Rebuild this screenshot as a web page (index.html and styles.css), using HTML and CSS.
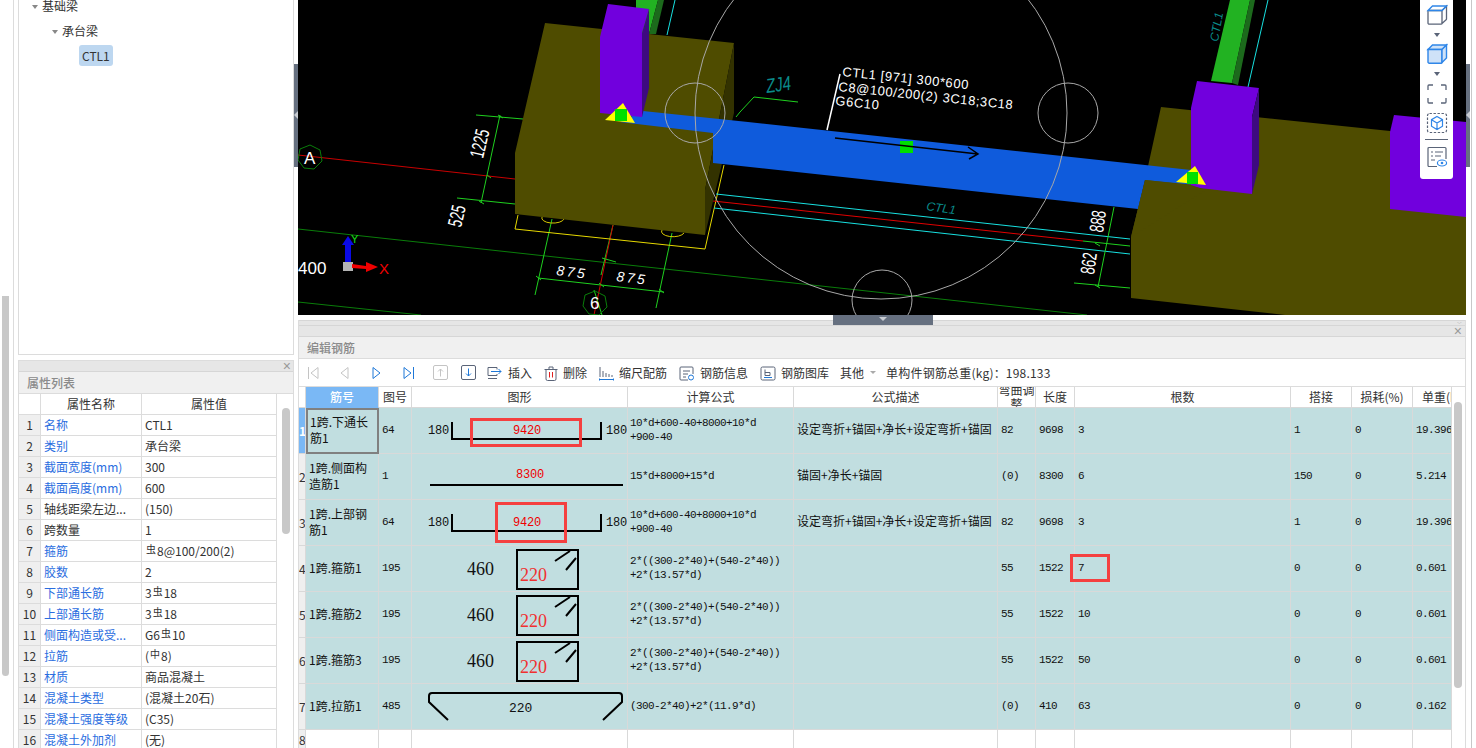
FILE: index.html
```html
<!DOCTYPE html>
<html lang="zh">
<head>
<meta charset="utf-8">
<title>编辑钢筋</title>
<link rel="stylesheet" href="styles.css">
</head>
<body>
<div class="page">
  <div class="rail"><div class="rail-thumb"></div></div>
  <aside class="side">
    <section class="tree-panel">
      <div class="node lv1"><i class="caret"></i>基础梁</div>
      <div class="node lv2"><i class="caret"></i>承台梁</div>
      <div class="node lv3"><span class="chip">CTL1</span></div>
    </section>
    <section class="prop-panel">
      <div class="strip"><span class="close">×</span></div>
      <div class="title">属性列表</div>
      <div class="prop-body">
        <table class="props">
          <colgroup><col class="p0"><col class="p1"><col class="p2"></colgroup>
          <tr><th class="corner"></th><th>属性名称</th><th>属性值</th></tr>
          <tr><td class="no">1</td><td class="blue">名称</td><td>CTL1</td></tr>
          <tr><td class="no">2</td><td class="blue">类别</td><td>承台梁</td></tr>
          <tr><td class="no">3</td><td class="blue">截面宽度(mm)</td><td>300</td></tr>
          <tr><td class="no">4</td><td class="blue">截面高度(mm)</td><td>600</td></tr>
          <tr><td class="no">5</td><td>轴线距梁左边...</td><td>(150)</td></tr>
          <tr><td class="no">6</td><td>跨数量</td><td>1</td></tr>
          <tr><td class="no">7</td><td class="blue">箍筋</td><td><span class="steel">虫</span>8@100/200(2)</td></tr>
          <tr><td class="no">8</td><td class="blue">胶数</td><td>2</td></tr>
          <tr><td class="no">9</td><td class="blue">下部通长筋</td><td>3<span class="steel">虫</span>18</td></tr>
          <tr><td class="no">10</td><td class="blue">上部通长筋</td><td>3<span class="steel">虫</span>18</td></tr>
          <tr><td class="no">11</td><td class="blue">侧面构造或受...</td><td>G6<span class="steel">虫</span>10</td></tr>
          <tr><td class="no">12</td><td class="blue">拉筋</td><td>(<span class="steel">中</span>8)</td></tr>
          <tr><td class="no">13</td><td class="blue">材质</td><td>商品混凝土</td></tr>
          <tr><td class="no">14</td><td class="blue">混凝土类型</td><td>(混凝土20石)</td></tr>
          <tr><td class="no">15</td><td class="blue">混凝土强度等级</td><td>(C35)</td></tr>
          <tr><td class="no">16</td><td class="blue">混凝土外加剂</td><td>(无)</td></tr>
        </table>
        <div class="prop-scroll"><div class="prop-thumb"></div></div>
      </div>
    </section>
  </aside>
  <div class="grip-v"><div class="grip-v-bar"><i></i></div></div>
  <main class="main">
    <div class="view">
      <svg class="scene" width="1168" height="315" viewBox="298 0 1168 315">
        <rect x="298" y="0" width="1168" height="315" fill="#000"/>
        <g fill="none" stroke-width="1">
          <path d="M298 155L515 179" stroke="#c80000"/>
          <path d="M298 229L1087 315M298 302L421 315" stroke="#0a7d0a"/>
          <path d="M476 115L523 119M457 198L515 204M500 115L481 203M498 115l5 3M479 201l5 3M487 175l4 3" stroke="#1fd01f"/>
          <path d="M552 219L535 295M672 233L656 308M538 278L664 292M613 225L601 275" stroke="#1fd01f"/>
          <path d="M613 225L594 315" stroke="#d00000"/>
          <path d="M602 258L616 262M594 290L602 315M536 276l5 4M599 283l5 4M659 289l5 4" stroke="#1fd01f"/>
          <path d="M518 215L515 229L705 249L724 165" stroke="#e6d800"/>
          <path d="M542 217a11 5 0 0 0 22 2M662 230a11 5 0 0 0 22 3" stroke="#d8c800"/>
          <path d="M740 112L754 97L798 102M736 117L740 112" stroke="#1fd01f"/>
          <path d="M716 194L1130 239M714 208L1130 254M1268 0L1248 87M675 0L667 35" stroke="#18e0e0"/>
          <path d="M713 201L1083 241" stroke="#e00000"/>
          <path d="M1083 241L1130 246M1074 283L1130 288M1114 207L1098 287M1095 243l5 3M1095 285l5 3" stroke="#1fd01f"/>
          <polygon points="310,145 320,150 322,161 314,169 304,168 298,160 300,149" stroke="#0a7d0a"/>
          <polygon points="595,291 605,296 607,307 599,315 589,314 583,306 585,295" stroke="#0a7d0a"/>
        </g>
        <polygon fill="#22b222" points="636,0 658,0 649,34 636,34"/>
        <polygon fill="#1c6a1c" points="658,0 664,0 656,34 649,34"/>
        <polygon fill="#4f4c00" points="545,23 734,43 705,190 705,235 515,214 515,153"/>
        <polygon fill="#333200" points="734,43 734,113 705,235 705,190"/>
        <polygon fill="#22b222" points="1230,0 1250,0 1232,83 1211,81"/>
        <polygon fill="#1c6a1c" points="1250,0 1255,0 1238,85 1232,83"/>
        <polygon fill="#4f4c00" points="1161,107 1390,131 1466,140 1466,315 1285,315 1131,298 1131,237 1145,180"/>
        <polygon fill="#0f5bdc" points="620,122 643,111 748,122 1191,170 1206,186 1145,180 1138,209 713,163 713,133"/>
        <polygon fill="#7100dd" points="608,4 649,9 642,33 642,117 600,113 600,37"/>
        <polygon fill="#3d0a80" points="649,9 649,88 642,117 642,33"/>
        <polygon fill="#7100dd" points="1197,81 1259,88 1252,117 1252,194 1191,187 1191,108"/>
        <polygon fill="#3d0a80" points="1259,88 1259,165 1252,194 1252,117"/>
        <polygon fill="#4f4c00" points="1145,180 1191,185 1206,190 1131,237"/>
        <polygon fill="#7100dd" points="1394,115 1466,122 1466,217 1390,209 1390,132"/>
        <polygon fill="#ffff00" points="623,103 635,123 605,120"/>
        <rect x="615" y="109" width="12" height="12" fill="#00e000"/>
        <polygon fill="#ffff00" points="1195,166 1206,185 1176,182"/>
        <rect x="1187" y="172" width="11" height="12" fill="#00e000"/>
        <rect x="900" y="141" width="13" height="12" fill="#00e000"/>
        <path d="M835 138L978 154M968 147L978 154L969 159" fill="none" stroke="#000" stroke-width="1.5"/>
        <path d="M840 74L827 130" stroke="#fff" stroke-width="1.5"/>
        <g fill="none" stroke="#a8a8a8" stroke-width="1">
          <circle cx="881" cy="113" r="186"/>
          <circle cx="695" cy="113" r="30"/>
          <circle cx="1068" cy="113" r="30"/>
          <circle cx="882" cy="300" r="30"/>
        </g>
        <g class="cad">
          <text class="big" transform="translate(310 164)" x="-6">A</text>
          <text class="big" transform="translate(595 309)" x="-5">6</text>
          <text class="dim" transform="translate(483 159) rotate(-77) scale(.65 1)">1225</text>
          <text class="dim" transform="translate(461 228) rotate(-77) scale(.65 1)">525</text>
          <text class="dim2" transform="translate(556 275) rotate(7)">875</text>
          <text class="dim2" transform="translate(616 281) rotate(7)">875</text>
          <text class="dim" transform="translate(1103 233) rotate(-82) scale(.65 1)">888</text>
          <text class="dim" transform="translate(1094 275) rotate(-82) scale(.65 1)">862</text>
          <text class="note" transform="translate(842 76) rotate(6)">CTL1 [971] 300*600</text>
          <text class="note" transform="translate(838 91) rotate(6)">C8@100/200(2) 3C18;3C18</text>
          <text class="note" transform="translate(835 105) rotate(6)">G6C10</text>
          <text class="tag" transform="translate(767 93) rotate(-8) scale(.75 1)">ZJ4</text>
          <text class="tag small" transform="translate(926 210) rotate(8)">CTL1</text>
          <text class="tag small" transform="translate(1218 42) rotate(-80)">CTL1</text>
          <text class="scale" x="298" y="274">400</text>
        </g>
        <g>
          <path d="M348 236L354 245L351 245L351 262L345 262L345 245L342 245Z" fill="#0a0ae6"/>
          <rect x="343" y="262" width="10" height="9" fill="#b4b4b4"/>
          <path d="M352 264L366 266L366 262L378 267L366 272L366 269L352 268Z" fill="#f00000"/>
          <text class="axis-x" x="379" y="274">X</text>
          <text class="axis-y" x="351" y="243">Y</text>
        </g>
      </svg>
      <div class="grip-v right"><div class="grip-v-bar"><i></i></div></div>
      <div class="view-tools">
        <svg width="22" height="22" viewBox="0 0 22 22" fill="none" stroke="#5a6478" stroke-width="1.3"><path d="M2 6.500V19a1.200 1.200 0 0 0 1.200 1.200H15a1 1 0 0 0 1-1V6.500H3M16 6.500L20.500 2V15a1 1 0 0 1-.4.8L16 19.500"/><path d="M2 6.500L6.500 2H20.500L16 6.500H2Z" stroke="#2f86e8"/></svg>
        <i class="tool-arrow"></i>
        <svg width="22" height="22" viewBox="0 0 22 22" fill="#cfe2f8" stroke="#2f86e8" stroke-width="1.4"><path d="M2 6.500L6.500 2H20.500L16 6.500H2Z"/><path d="M2 6.500V19a1.200 1.200 0 0 0 1.200 1.200H15a1 1 0 0 0 1-1V6.500Z"/><path d="M16 6.500L20.500 2V15L16 19.500Z"/></svg>
        <i class="tool-arrow"></i>
        <svg class="t3" width="22" height="22" viewBox="0 0 22 22" fill="none" stroke="#5a6478" stroke-width="1.3"><path d="M2 7V3a1 1 0 0 1 1-1H7M15 2H19a1 1 0 0 1 1 1V7M20 15V19a1 1 0 0 1-1 1H15M7 20H3a1 1 0 0 1-1-1V15"/></svg>
        <svg class="t4" width="22" height="22" viewBox="0 0 22 22" fill="none"><rect x="1.500" y="1.500" width="19" height="19" rx="2" stroke="#5a6478" stroke-width="1.2" stroke-dasharray="2.4 1.6"/><path d="M11 4.500L16.500 7.700V14.200L11 17.500L5.500 14.200V7.700ZM5.500 7.700L11 11L16.500 7.700M11 11V17.500" stroke="#2f86e8" stroke-width="1.2"/></svg>
        <div class="tool-sep"></div>
        <svg width="22" height="22" viewBox="0 0 22 22" fill="none"><path d="M11 20.500H3a1 1 0 0 1-1-1V2.500a1 1 0 0 1 1-1H19a1 1 0 0 1 1 1V13" stroke="#5a6478" stroke-width="1.2"/><path d="M9 6H17M5 6H7M9 10H15M5 10H7M5 14H9" stroke="#5a6478" stroke-width="1.1"/><ellipse cx="16" cy="17" rx="4.600" ry="3" fill="#fff" stroke="#2f86e8" stroke-width="1.2"/><circle cx="16" cy="17" r="1.300" fill="#2f86e8"/></svg>
      </div>
    </div>
    <div class="splitter"><div class="splitter-bar"><i></i></div></div>
    <section class="rebar">
      <div class="strip thin"><span class="chev">﹀</span></div>
      <div class="strip"><span class="close">×</span></div>
      <div class="title">编辑钢筋</div>
      <div class="toolbar">
        <span class="nav"><svg width="12" height="14" viewBox="0 0 12 14" fill="none" stroke="#c4c4c4"><path d="M1.500 1V13M11 1.500L4 7L11 12.500Z"/></svg></span>
        <span class="nav"><svg width="12" height="14" viewBox="0 0 12 14" fill="none" stroke="#c4c4c4"><path d="M9 1.500L2 7L9 12.500Z"/></svg></span>
        <span class="nav"><svg width="12" height="14" viewBox="0 0 12 14" fill="none" stroke="#1f78d8"><path d="M2 1.500L9 7L2 12.500Z"/></svg></span>
        <span class="nav"><svg width="12" height="14" viewBox="0 0 12 14" fill="none" stroke="#1f78d8"><path d="M1 1.500L8 7L1 12.500ZM10.500 1V13"/></svg></span>
        <span class="boxed"><svg width="15" height="15" viewBox="0 0 15 15" fill="none" stroke="#c4c4c4"><rect x=".5" y=".5" width="14" height="14" rx="1.500"/><path d="M7.500 11.500V4M5 6.500L7.500 4L10 6.500"/></svg></span>
        <span class="boxed"><svg width="15" height="15" viewBox="0 0 15 15" fill="none"><rect x=".5" y=".5" width="14" height="14" rx="1.500" stroke="#5a6478"/><path d="M7.500 3.500V11M5 8.500L7.500 11L10 8.500" stroke="#1f78d8"/></svg></span>
        <span class="tool first"><svg width="16" height="14" viewBox="0 0 16 14" fill="none"><path d="M10 3.500V1.500H1V9.500H10V8" stroke="#5a6478"/><path d="M4 5.500H14M11.500 3L14 5.500L11.500 8" stroke="#1f78d8"/><path d="M1 12.500H10" stroke="#5a6478"/></svg>插入</span>
        <span class="tool"><svg width="14" height="15" viewBox="0 0 14 15" fill="none" stroke="#5a6478"><path d="M2 3.500V13a1.500 1.500 0 0 0 1.500 1.500h7A1.500 1.500 0 0 0 12 13V3.500M.5 3.500H13.500M5 3.500V1h4V3.500"/><path d="M5.500 6V11.500M8.500 6V11.500" stroke="#e02020"/></svg>删除</span>
        <span class="tool"><svg width="15" height="15" viewBox="0 0 15 15" fill="none" stroke="#5a6478"><path d="M1 1V11M4 5V11M7 7V11M10 8V11M13 9V11"/><path d="M0 13.500H15M0 12V15M15 12V15" stroke="#1f78d8"/></svg>缩尺配筋</span>
        <span class="tool"><svg width="16" height="15" viewBox="0 0 16 15" fill="none" stroke="#5a6478"><path d="M9 14H2a1 1 0 0 1-1-1V2a1 1 0 0 1 1-1H13a1 1 0 0 1 1 1V8M4 5H11M4 8H9M4 11H7"/><circle cx="12" cy="11.500" r="2.500" stroke="#1f78d8"/></svg>钢筋信息</span>
        <span class="tool"><svg width="16" height="15" viewBox="0 0 16 15" fill="none" stroke="#5a6478"><rect x="1" y="1" width="14" height="13" rx="1.500"/><path d="M5 3.500V9.500H10V6.500H5"/><path d="M4 11.500H12" stroke="#1f78d8"/></svg>钢筋图库</span>
        <span class="tool other">其他<i class="mini-arrow"></i></span>
        <span class="tool total">单构件钢筋总重(kg)：198.133</span>
      </div>
      <div class="grid-wrap">
        <table class="grid">
          <colgroup><col class="c0"><col class="c1"><col class="c2"><col class="c3"><col class="c4"><col class="c5"><col class="c6"><col class="c7"><col class="c8"><col class="c9"><col class="c10"><col class="c11"></colgroup>
          <thead><tr class="head">
            <th></th><th class="sel-head">筋号</th><th>图号</th><th>图形</th><th>计算公式</th><th>公式描述</th>
            <th><div class="clip">弯曲调整</div></th><th>长度</th><th>根数</th><th>搭接</th><th>损耗(%)</th><th><div class="clip nowrap">单重(kg)</div></th>
          </tr></thead>
          <tbody>
            <tr class="row">
              <td class="rn sel-rn">1</td><td class="name sel-cell">1跨.下通长筋1</td><td class="m">64</td>
              <td class="shape"><svg width="215" height="45" viewBox="0 0 215 45"><text class="sn" x="16" y="26">180</text><path class="line" d="M40 14V31H189V14"/><text class="sr" x="115" y="26">9420</text><text class="sn" x="194" y="26">180</text><rect class="mark" x="59.500" y="11.500" width="109" height="26"/></svg></td>
              <td class="m f">10*d+600-40+8000+10*d<br>+900-40</td><td class="d">设定弯折+锚固+净长+设定弯折+锚固</td><td class="m">82</td><td class="m">9698</td><td class="m">3</td><td class="m">1</td><td class="m">0</td><td class="m">19.396</td>
            </tr>
            <tr class="row">
              <td class="rn">2</td><td class="name">1跨.侧面构造筋1</td><td class="m">1</td>
              <td class="shape"><svg width="215" height="45" viewBox="0 0 215 45"><text class="sr" x="118" y="24">8300</text><path class="line" d="M18 31H211"/></svg></td>
              <td class="m f">15*d+8000+15*d</td><td class="d">锚固+净长+锚固</td><td class="m">(0)</td><td class="m">8300</td><td class="m">6</td><td class="m">150</td><td class="m">0</td><td class="m">5.214</td>
            </tr>
            <tr class="row">
              <td class="rn">3</td><td class="name">1跨.上部钢筋1</td><td class="m">64</td>
              <td class="shape"><svg width="215" height="45" viewBox="0 0 215 45"><text class="sn" x="16" y="26">180</text><path class="line" d="M40 14V31H189V14"/><text class="sr" x="115" y="26">9420</text><text class="sn" x="194" y="26">180</text><rect class="mark" x="84.500" y="3.500" width="69" height="38"/></svg></td>
              <td class="m f">10*d+600-40+8000+10*d<br>+900-40</td><td class="d">设定弯折+锚固+净长+设定弯折+锚固</td><td class="m">82</td><td class="m">9698</td><td class="m">3</td><td class="m">1</td><td class="m">0</td><td class="m">19.396</td>
            </tr>
            <tr class="row">
              <td class="rn">4</td><td class="name">1跨.箍筋1</td><td class="m">195</td>
              <td class="shape"><svg width="215" height="45" viewBox="0 0 215 45"><text class="st" x="55" y="29">460</text><path class="line" d="M105 4H166V43H105ZM143 15L158 5M154 24L164 12"/><text class="st red" x="108" y="35">220</text></svg></td>
              <td class="m f">2*((300-2*40)+(540-2*40))<br>+2*(13.57*d)</td><td class="d"></td><td class="m">55</td><td class="m">1522</td><td class="m rel">7<span class="mark-box"></span></td><td class="m">0</td><td class="m">0</td><td class="m">0.601</td>
            </tr>
            <tr class="row">
              <td class="rn">5</td><td class="name">1跨.箍筋2</td><td class="m">195</td>
              <td class="shape"><svg width="215" height="45" viewBox="0 0 215 45"><text class="st" x="55" y="29">460</text><path class="line" d="M105 4H166V43H105ZM143 15L158 5M154 24L164 12"/><text class="st red" x="108" y="35">220</text></svg></td>
              <td class="m f">2*((300-2*40)+(540-2*40))<br>+2*(13.57*d)</td><td class="d"></td><td class="m">55</td><td class="m">1522</td><td class="m">10</td><td class="m">0</td><td class="m">0</td><td class="m">0.601</td>
            </tr>
            <tr class="row">
              <td class="rn">6</td><td class="name">1跨.箍筋3</td><td class="m">195</td>
              <td class="shape"><svg width="215" height="45" viewBox="0 0 215 45"><text class="st" x="55" y="29">460</text><path class="line" d="M105 4H166V43H105ZM143 15L158 5M154 24L164 12"/><text class="st red" x="108" y="35">220</text></svg></td>
              <td class="m f">2*((300-2*40)+(540-2*40))<br>+2*(13.57*d)</td><td class="d"></td><td class="m">55</td><td class="m">1522</td><td class="m">50</td><td class="m">0</td><td class="m">0</td><td class="m">0.601</td>
            </tr>
            <tr class="row">
              <td class="rn">7</td><td class="name">1跨.拉筋1</td><td class="m">485</td>
              <td class="shape"><svg width="215" height="45" viewBox="0 0 215 45"><path class="line" d="M36 36L17 18V12Q17 9 20 9H207Q210 9 210 12V18L191 36"/><text class="sh" x="97" y="28">220</text></svg></td>
              <td class="m f">(300-2*40)+2*(11.9*d)</td><td class="d"></td><td class="m">(0)</td><td class="m">410</td><td class="m">63</td><td class="m">0</td><td class="m">0</td><td class="m">0.162</td>
            </tr>
            <tr class="blank">
              <td class="rn">8</td><td></td><td></td><td></td><td></td><td></td><td></td><td></td><td></td><td></td><td></td><td></td>
            </tr>
          </tbody>
        </table>
        <div class="grid-scroll"><div class="grid-thumb"></div></div>
      </div>
    </section>
  </main>
</div>
</body>
</html>
```
FILE: styles.css
```css
* { box-sizing: border-box; }
html, body { margin: 0; height: 100%; background: #fff; overflow: hidden; }
body { font: 12px/1.2 "Noto Sans CJK SC", "Liberation Sans", sans-serif; color: #333; }
.page { display: flex; width: 1476px; height: 748px; overflow: hidden; }

.rail { width: 13px; flex: none; padding: 296px 0 0 2px; }
.rail-thumb { width: 7px; height: 380px; background: #c8c8c8; border-radius: 0 0 4px 4px; }

.side { width: 281px; flex: none; border-left: 1px solid #dcdcdc; padding-left: 4px; display: flex; flex-direction: column; }
.tree-panel { height: 355px; flex: none; border: 1px solid #dcdcdc; border-width: 0 1px 1px 1px; padding-left: 13px; }
.node { display: flex; align-items: center; height: 25px; color: #333; }
.lv1 { margin-top: -6px; }
.lv2 { padding-left: 20px; }
.lv3 { padding-left: 47px; height: 23px; }
.caret { width: 0; height: 0; border: 3.500px solid transparent; border-top: 4px solid #888; border-bottom: 0; margin-right: 4px; }
.chip { background: #bdd7f0; border-radius: 3px; padding: 3px; line-height: 15px; }

.prop-panel { margin-top: 5px; flex: 1; min-height: 0; border: 1px solid #dcdcdc; border-bottom: 0; display: flex; flex-direction: column; overflow: hidden; }
.strip { height: 11px; flex: none; background: #e6e6e6; border-bottom: 1px solid #d6d6d6; position: relative; }
.close { position: absolute; right: 2px; top: -2px; font: 14px/14px "Liberation Sans", sans-serif; color: #999; }
.title { height: 22px; flex: none; background: #f0f0f0; border-bottom: 1px solid #dcdcdc; padding: 3px 0 0 8px; color: #8a8a8a; font-size: 12px; font-weight: 500; line-height: 16px; }
.prop-body { flex: 1; min-height: 0; display: flex; overflow: hidden; }
.props { border-collapse: separate; border-spacing: 0; table-layout: fixed; width: 258px; flex: none; align-self: flex-start; }
.p0 { width: 22px; } .p1 { width: 101px; } .p2 { width: 135px; }
.props th, .props td { height: 21px; padding: 0 3px; border-right: 1px solid #dcdcdc; border-bottom: 1px solid #dcdcdc; font-weight: 400; white-space: nowrap; overflow: hidden; color: #333; line-height: 20px; }
.props th { text-align: center; }
.props td.no { background: #efefef; text-align: center; padding: 0; }
.props td.blue { color: #2a6de0; }
.steel { display: inline-block; font-size: 10px; line-height: 10px; height: 10px; position: relative; top: -3px; margin: 0 1px; vertical-align: baseline; }
.prop-scroll { flex: 1; padding: 14px 0 0 5px; }
.prop-thumb { width: 8px; height: 126px; border-radius: 4px; background: #c8c8c8; }

.grip-v { width: 4px; flex: none; }
.grip-v-bar { margin-top: 64px; height: 103px; background: #667080; position: relative; }
.grip-v-bar i { position: absolute; top: 47px; left: 0; width: 0; height: 0; border: 4px solid transparent; border-right-color: #c8ccd2; border-left: 0; }
.main { width: 1174px; flex: none; display: flex; flex-direction: column; border-right: 1px solid #c8c8c8; }

.view { height: 315px; flex: none; display: flex; position: relative; }
.scene { display: block; flex: none; }
.cad text { font-family: "Liberation Sans", sans-serif; fill: #fff; }
.cad .big { font-size: 17px; }
.cad .dim { font-size: 20px; }
.cad .dim2 { font-size: 14px; font-style: italic; letter-spacing: 2.500px; }
.cad .note { font-size: 13px; letter-spacing: .6px; }
.cad .tag { fill: #0a8a8a; font-size: 20px; font-style: italic; }
.cad .tag.small { font-size: 12px; }
.cad .scale { font-size: 17px; }
.axis-x { font: 15px "Liberation Sans", sans-serif; fill: #f00000; }
.axis-y { font: 11px "Liberation Sans", sans-serif; fill: #18e018; }
.view-tools { position: absolute; left: 1122px; top: 0; width: 33px; height: 179px; background: #fff; border-radius: 0 0 3px 3px; display: flex; flex-direction: column; align-items: center; padding-top: 4px; }
.view-tools svg { display: block; flex: none; }
.tool-arrow { width: 0; height: 0; margin: 7px 0 6px; border: 3.500px solid transparent; border-top: 4px solid #5a6478; border-bottom: 0; }
.view-tools .t3 { margin-top: 1px; }
.view-tools .t4 { margin-top: 7px; }
.tool-sep { width: 23px; height: 1px; background: #5a6478; margin: 5px 0 6px; flex: none; }

.splitter { height: 5px; flex: none; padding-left: 535px; }
.splitter-bar { width: 100px; height: 10px; background: #667080; position: relative; z-index: 2; }
.splitter-bar i { position: absolute; left: 46px; top: 2px; width: 0; height: 0; border: 4px solid transparent; border-top: 4px solid #c8ccd2; border-bottom: 0; }

.rebar { flex: 1; min-height: 0; margin-right: 5px; display: flex; flex-direction: column; border-left: 1px solid #dcdcdc; border-right: 1px solid #dcdcdc; overflow: hidden; }
.strip.thin { height: 6px; border-top: 1px solid #d6d6d6; }
.rebar .close { right: 3px; }
.chev { position: absolute; right: 3px; top: 0; font: 5px/5px "Liberation Sans", sans-serif; color: #999; }
.rebar .title { padding-left: 8px; }

.toolbar { height: 28px; flex: none; display: flex; align-items: center; padding-left: 8px; border-bottom: 1px solid #dcdcdc; white-space: nowrap; }
.toolbar svg { display: block; flex: none; }
.nav { width: 32px; flex: none; }
.boxed { width: 28px; flex: none; margin-left: -2px; }
.boxed + .boxed { margin-left: 0; }
.tool { display: inline-flex; align-items: center; gap: 5px; margin-left: 12px; flex: none; padding-top: 1px; }
.tool.first { margin-left: -2px; }
.tool.other { margin-left: 11px; gap: 4px; }
.tool.total { margin-left: 10px; letter-spacing: .2px; }
.mini-arrow { width: 0; height: 0; border: 3px solid transparent; border-top: 3px solid #aaa; border-bottom: 0; margin-left: 2px; }

.grid-wrap { flex: 1; min-height: 0; display: flex; overflow: hidden; }
.grid { table-layout: fixed; width: 1153px; flex: none; align-self: flex-start; border-collapse: separate; border-spacing: 0; }
.c0 { width: 7px; } .c1 { width: 73px; } .c2 { width: 33px; } .c3 { width: 216px; } .c4 { width: 166px; } .c5 { width: 204px; }
.c6 { width: 38px; } .c7 { width: 39px; } .c8 { width: 216px; } .c9 { width: 61px; } .c10 { width: 61px; } .c11 { width: 39px; }
.grid th, .grid td { padding: 0; border-right: 1px solid #d9d9d9; border-bottom: 1px solid #d9d9d9; overflow: hidden; }
.grid th { height: 21px; font-weight: 400; color: #333; text-align: center; }
.grid th.sel-head { background: #7ab8f5; color: #fff; font-weight: 500; border-bottom-color: #7ab8f5; }
.clip { height: 20px; display: flex; align-items: center; justify-content: center; overflow: hidden; line-height: 14px; }
.clip.nowrap { white-space: nowrap; justify-content: flex-start; padding-left: 9px; }
.row td { height: 46px; background: #c1dee0; vertical-align: middle; }
.blank td { height: 46px; }
.grid td.rn { background: #efefef; text-align: center; overflow: hidden; color: #333; font-size: 12px; padding: 2px 0 0; }
.blank td.rn { vertical-align: top; padding-top: 3px; }
.grid td.sel-rn { background: #7ab8f5; color: #fff; font-weight: 700; }
.grid td.name { padding: 0 2px 2px 3px; line-height: 16px; color: #111; }
.grid td.sel-cell { border: 2px solid #808080; padding: 0 1px 2px 2px; }
.grid td.m { font: 11px/14px "Liberation Mono", monospace; letter-spacing: -.6px; padding: 0 0 2px 3px; color: #111; white-space: nowrap; }
.grid td.f { padding-left: 2px; line-height: 14px; }
.grid td.d { padding: 0 0 2px 3px; color: #111; white-space: nowrap; }
.grid td.rel { position: relative; overflow: visible; }
.mark-box { position: absolute; left: -5px; top: 8px; width: 40px; height: 28px; border: 3px solid #f44040; }
.shape svg { display: block; }
.shape text { font-family: "Liberation Mono", monospace; }
.line { fill: none; stroke: #000; stroke-width: 2; }
.mark { fill: none; stroke: #f44040; stroke-width: 3; }
.sn { font-size: 12px; letter-spacing: -.2px; fill: #111; }
.sr { font-size: 12px; letter-spacing: -.2px; fill: #f00000; text-anchor: middle; }
.shape text.st { font-family: "Liberation Serif", serif; font-size: 18px; fill: #111; }
.shape text.st.red { fill: #f03030; }
.sh { font-size: 13px; fill: #111; }
.grid-scroll { flex: 1; padding: 15px 0 0 2px; }
.grid-thumb { width: 8px; height: 286px; background: #c8c8c8; border-radius: 4px; }
```
